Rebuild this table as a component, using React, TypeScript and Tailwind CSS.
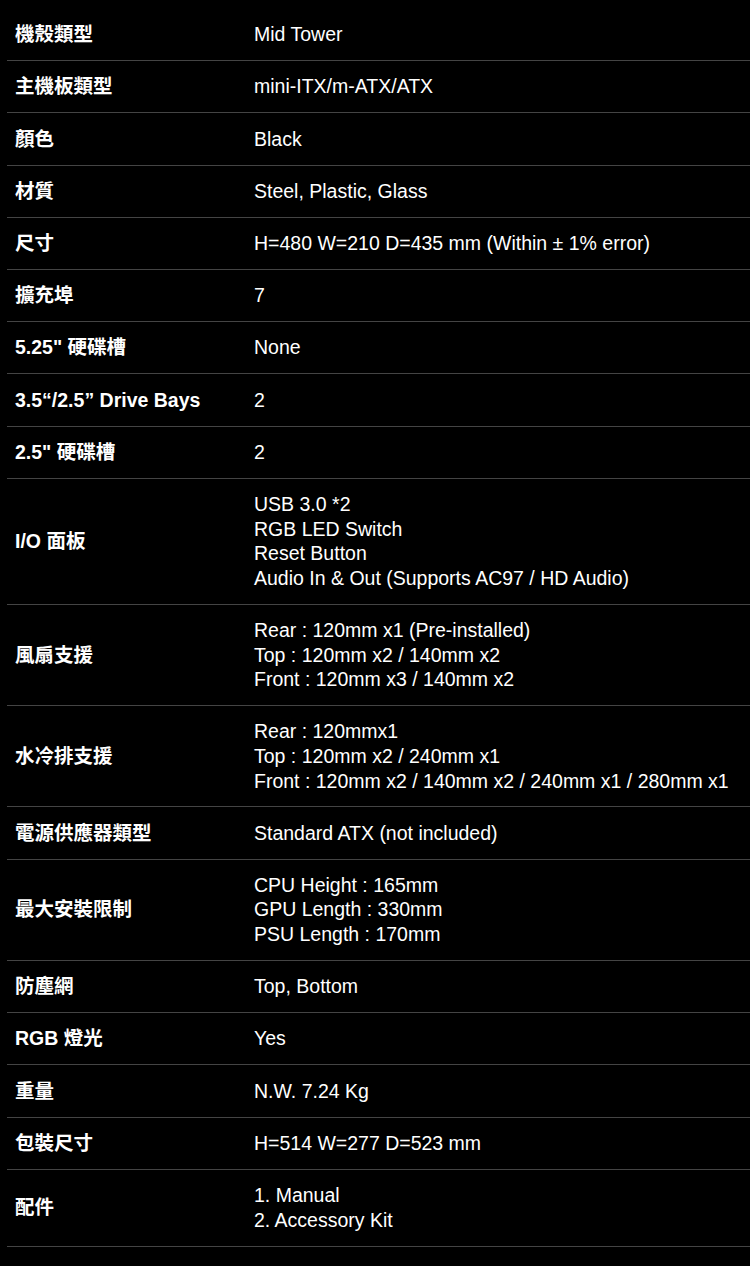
const specs: { label: string; value: string[] }[] = [
  { label: '機殼類型', value: ['Mid Tower'] },
  { label: '主機板類型', value: ['mini-ITX/m-ATX/ATX'] },
  { label: '顏色', value: ['Black'] },
  { label: '材質', value: ['Steel, Plastic, Glass'] },
  { label: '尺寸', value: ['H=480 W=210 D=435 mm (Within ± 1% error)'] },
  { label: '擴充埠', value: ['7'] },
  { label: '5.25" 硬碟槽', value: ['None'] },
  { label: '3.5“/2.5” Drive Bays', value: ['2'] },
  { label: '2.5" 硬碟槽', value: ['2'] },
  {
    label: 'I/O 面板',
    value: ['USB 3.0 *2', 'RGB LED Switch', 'Reset Button', 'Audio In & Out (Supports AC97 / HD Audio)'],
  },
  {
    label: '風扇支援',
    value: ['Rear : 120mm x1 (Pre-installed)', 'Top : 120mm x2 / 140mm x2', 'Front : 120mm x3 / 140mm x2'],
  },
  {
    label: '水冷排支援',
    value: ['Rear : 120mmx1', 'Top : 120mm x2 / 240mm x1', 'Front : 120mm x2 / 140mm x2 / 240mm x1 / 280mm x1'],
  },
  { label: '電源供應器類型', value: ['Standard ATX (not included)'] },
  {
    label: '最大安裝限制',
    value: ['CPU Height : 165mm', 'GPU Length : 330mm', 'PSU Length : 170mm'],
  },
  { label: '防塵網', value: ['Top, Bottom'] },
  { label: 'RGB 燈光', value: ['Yes'] },
  { label: '重量', value: ['N.W. 7.24 Kg'] },
  { label: '包裝尺寸', value: ['H=514 W=277 D=523 mm'] },
  { label: '配件', value: ['1. Manual', '2. Accessory Kit'] },
]

export default function App() {
  return (
    <div
      className="min-h-[1266px] w-[750px] bg-black pt-[9px] pl-[7px] text-white"
      style={{ fontFamily: '"Liberation Sans", Arial, "Noto Sans CJK TC", sans-serif' }}
    >
      {specs.map((row) => (
        <div key={row.label} className="flex items-center border-b border-[#444444]">
          <div className="w-[239px] shrink-0 px-2 text-[19.5px] leading-[24.6px] font-bold">{row.label}</div>
          <div className="flex-1 px-2 py-[13.3px] text-[19.5px] leading-[24.6px] whitespace-nowrap">
            {row.value.map((line) => (
              <div key={line}>{line}</div>
            ))}
          </div>
        </div>
      ))}
    </div>
  )
}
